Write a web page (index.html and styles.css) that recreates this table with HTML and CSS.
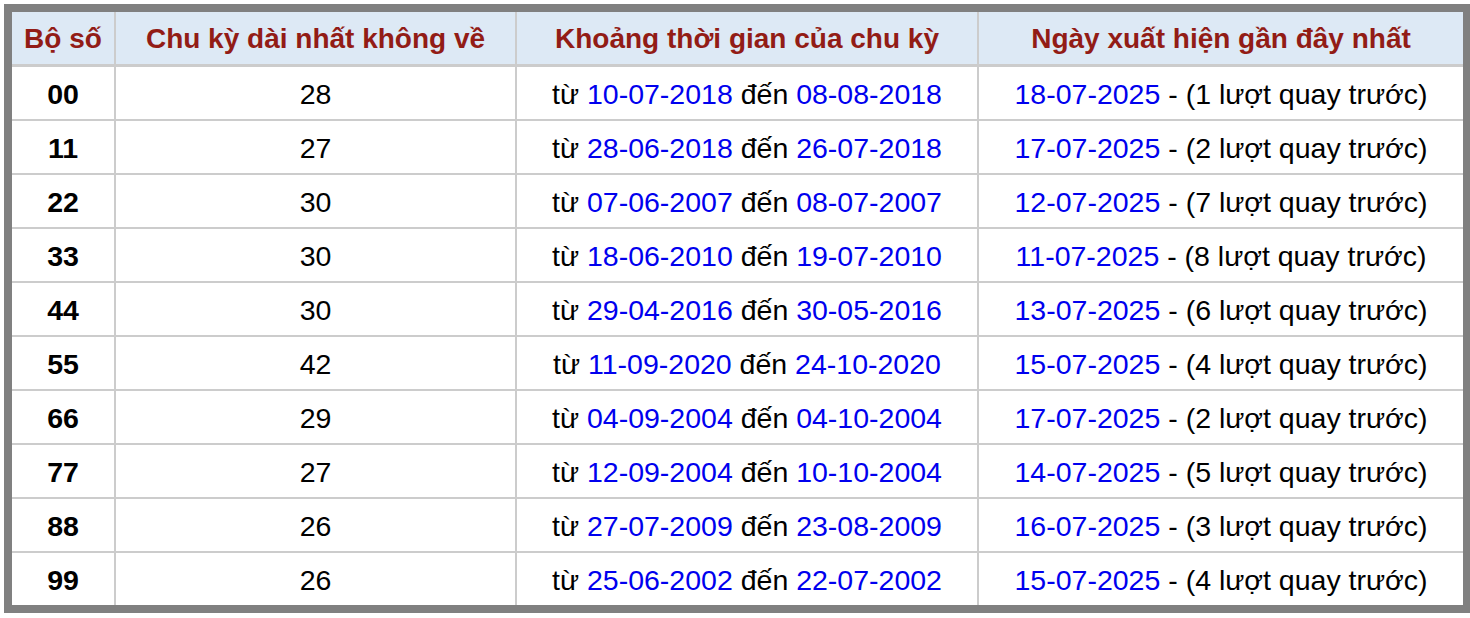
FILE: index.html
```html
<!DOCTYPE html>
<html lang="vi">
<head>
<meta charset="utf-8">
<link rel="stylesheet" href="styles.css">
</head>
<body>
<table class="tbl">
  <thead>
    <tr>
      <th class="c1">Bộ số</th>
      <th class="c2">Chu kỳ dài nhất không về</th>
      <th class="c3">Khoảng thời gian của chu kỳ</th>
      <th class="c4">Ngày xuất hiện gần đây nhất</th>
    </tr>
  </thead>
  <tbody>
    <tr><td class="num">00</td><td>28</td><td>từ <span class="d">10-07-2018</span> đến <span class="d">08-08-2018</span></td><td><span class="d">18-07-2025</span> - (1 lượt quay trước)</td></tr>
    <tr><td class="num">11</td><td>27</td><td>từ <span class="d">28-06-2018</span> đến <span class="d">26-07-2018</span></td><td><span class="d">17-07-2025</span> - (2 lượt quay trước)</td></tr>
    <tr><td class="num">22</td><td>30</td><td>từ <span class="d">07-06-2007</span> đến <span class="d">08-07-2007</span></td><td><span class="d">12-07-2025</span> - (7 lượt quay trước)</td></tr>
    <tr><td class="num">33</td><td>30</td><td>từ <span class="d">18-06-2010</span> đến <span class="d">19-07-2010</span></td><td><span class="d">11-07-2025</span> - (8 lượt quay trước)</td></tr>
    <tr><td class="num">44</td><td>30</td><td>từ <span class="d">29-04-2016</span> đến <span class="d">30-05-2016</span></td><td><span class="d">13-07-2025</span> - (6 lượt quay trước)</td></tr>
    <tr><td class="num">55</td><td>42</td><td>từ <span class="d">11-09-2020</span> đến <span class="d">24-10-2020</span></td><td><span class="d">15-07-2025</span> - (4 lượt quay trước)</td></tr>
    <tr><td class="num">66</td><td>29</td><td>từ <span class="d">04-09-2004</span> đến <span class="d">04-10-2004</span></td><td><span class="d">17-07-2025</span> - (2 lượt quay trước)</td></tr>
    <tr><td class="num">77</td><td>27</td><td>từ <span class="d">12-09-2004</span> đến <span class="d">10-10-2004</span></td><td><span class="d">14-07-2025</span> - (5 lượt quay trước)</td></tr>
    <tr><td class="num">88</td><td>26</td><td>từ <span class="d">27-07-2009</span> đến <span class="d">23-08-2009</span></td><td><span class="d">16-07-2025</span> - (3 lượt quay trước)</td></tr>
    <tr><td class="num">99</td><td>26</td><td>từ <span class="d">25-06-2002</span> đến <span class="d">22-07-2002</span></td><td><span class="d">15-07-2025</span> - (4 lượt quay trước)</td></tr>
  </tbody>
</table>
</body>
</html>
```
FILE: styles.css
```css
html, body {
  margin: 0;
  padding: 0;
  background: #fff;
}
body {
  padding: 4px 0 0 4px;
  font-family: "Liberation Sans", Arial, sans-serif;
}
.tbl {
  width: 1466px;
  border-collapse: collapse;
  border: 8px solid #808080;
  border-right-width: 7px;
  table-layout: fixed;
}
.tbl th, .tbl td {
  border: 2px solid #cccccc;
  text-align: center;
  font-size: 28.5px;
  padding: 2px 0 0 0;
  height: 50px;
}
.tbl th {
  background: #dde9f5;
  color: #921c16;
  font-weight: bold;
  font-size: 28px;
  border-bottom-width: 3px;
  height: 50px;
}
.c1 { width: 102px; }
.c2 { width: 399px; }
.c3 { width: 460px; }
.tbl td { color: #000; }
.tbl td.num { font-weight: bold; }
.d { color: #0000ee; }
```
